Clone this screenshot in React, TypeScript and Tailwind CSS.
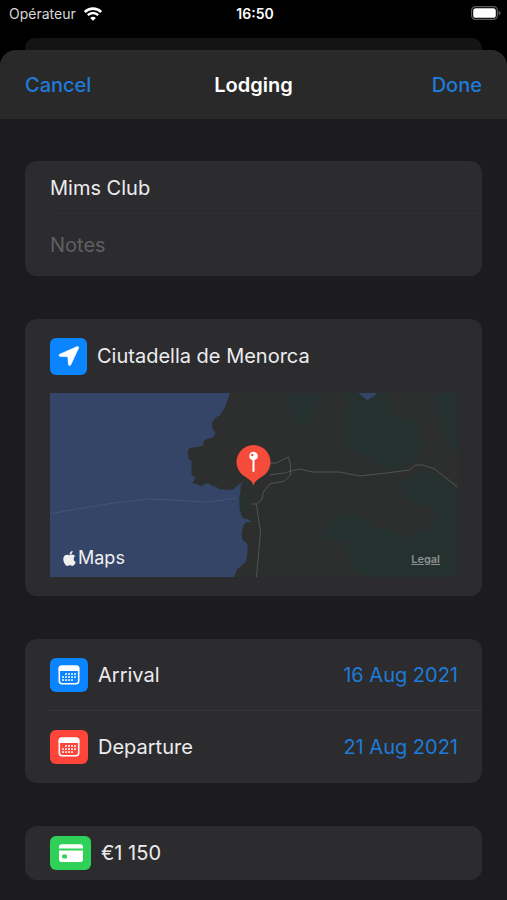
import type { ReactNode } from 'react';
import { FaApple } from 'react-icons/fa';

function WifiIcon() {
  return (
    <svg viewBox="0 0 18 14" className="h-[14px] w-[18px]" fill="none" aria-hidden="true">
      <path d="M0.800 5a11.600 11.600 0 0 1 16.400 0" stroke="#fff" strokeWidth="2.600" />
      <path d="M3.800 8.200a7.300 7.300 0 0 1 10.400 0" stroke="#fff" strokeWidth="2.400" />
      <path d="M9 13.800 6.200 11a3.900 3.900 0 0 1 5.600 0z" fill="#fff" />
    </svg>
  );
}

function BatteryIcon() {
  return (
    <svg viewBox="0 0 30 14" className="h-[14px] w-[30px]" aria-hidden="true">
      <rect x="0.6" y="0.6" width="25.8" height="12.8" rx="4" fill="none" stroke="#5c5c5c" strokeWidth="1.2" />
      <rect x="2.2" y="2.2" width="22.6" height="9.6" rx="2.6" fill="#fff" />
      <path d="M27.6 4.8c1.4.5 2 1.3 2 2.2s-.6 1.7-2 2.2z" fill="#5c5c5c" />
    </svg>
  );
}

function LocationIcon() {
  return (
    <svg viewBox="0 0 22 22" className="size-[22px]" aria-hidden="true">
      <path
        d="M19.2 1.6 1.8 9.2c-1.100.5-.9 2.200.5 2.200l7.600.3.500 7.700c.1 1.400 1.800 1.600 2.400.4l7.700-16.600c.5-1-.3-2-1.300-1.600z"
        fill="#fff"
        stroke="#fff"
        strokeWidth="0.6"
        strokeLinejoin="round"
      />
    </svg>
  );
}

const calendarDots = [
  [9, 9], [12, 9], [15, 9], [18, 9],
  [6, 12], [9, 12], [12, 12], [15, 12], [18, 12],
  [6, 15], [9, 15], [12, 15], [15, 15],
];

function CalendarIcon() {
  return (
    <svg viewBox="0 0 22 20" className="h-[20px] w-[22px]" aria-hidden="true">
      <rect x="1.3" y="1.3" width="19.4" height="17.4" rx="2.6" fill="none" stroke="#fff" strokeWidth="1.6" />
      <path d="M.6 6V3.400A2.800 2.800 0 0 1 3.400.6h15.200a2.800 2.800 0 0 1 2.800 2.800V6z" fill="#fff" />
      {calendarDots.map(([x, y]) => (
        <rect key={`${x}-${y}`} x={x - 2} y={y - 1} width="2" height="2" rx="0.5" fill="#fff" fillOpacity="0.8" />
      ))}
    </svg>
  );
}

function CardIcon() {
  return (
    <svg viewBox="0 0 26 20" className="h-[20px] w-[26px]" aria-hidden="true">
      <path d="M1 5.6V4a2.800 2.800 0 0 1 2.800-2.800h18.400A2.800 2.800 0 0 1 25 4v1.600z" fill="#fff" />
      <path
        fillRule="evenodd"
        d="M1 7.400h24v8.800a2.800 2.800 0 0 1-2.800 2.800H3.800A2.800 2.800 0 0 1 1 16.200zM5.600 11.600a1.400 1.400 0 0 0-1.400 1.400v1.200a1.400 1.400 0 0 0 1.400 1.400h2a1.400 1.400 0 0 0 1.400-1.400v-1.200a1.400 1.400 0 0 0-1.400-1.400z"
        fill="#fff"
      />
    </svg>
  );
}

function MapDrawing() {
  return (
    <svg
      viewBox="0 0 409 184"
      preserveAspectRatio="xMidYMid slice"
      className="block h-[184px] w-full"
      role="img"
      aria-label="Map of Ciutadella de Menorca"
    >
      <rect width="409" height="184" fill="#354567" />
      <path
        d="M180 0 179 5 175 15 171 22 167 24 162 30 163 36 166 40 164 44 155 47 153 53 140 55 138 60 139 66 142 68 142 82 146 85 143 90 152 93 158 90 163 93 167 94 169 96 180 97 184 96 190 91 194 89 191 93 191 98 190 104 190 116 193 125 197 126 200 127 203 129 197 129 194 132 192 140 193 147 198 151 198 160 196 169 187 177 185 184 H409 V0Z"
        fill="#2c2f2e"
      />
      <g fill="#25312f">
        <path d="M240 0h30v8l-5 8-3 12-8 7-11-5-3-14z" />
        <path d="M292 0h17l9 8 10-8h12l0 22 28 4 4 28-5 14-12 4-6 8-20-8-18-10-16-8-2-26 6-18z" />
        <path d="M386 0h23v58l-14-10-2-14-8-14z" />
        <path d="M350 90l22-12 18 6 19 16v84h-45l-8-18 0-20 12-8 14-4 4-16-10-6-20-4z" />
        <path d="M284 124l20-4 16 8 6 8 14-2 20 14 2 36h-46l-12-8-8-26-24-6 4-12z" />
        <path d="M190 104l4-1 3 6-2 12-4-4z" />
      </g>
      <path d="M309 0h18l-2 3-7 4-6-4z" fill="#354567" />
      <path d="M0 121l33-6 38-6 29-3 60 3 27-4" fill="none" stroke="#40557a" strokeWidth="1" />
      <g fill="none" stroke="#515454" strokeWidth="1" strokeLinejoin="round">
        <path d="M220 82l15-2 10-3 5-1 13 3h27l20 4 27-3 23-3 6-5h7l12 4 23 18" />
        <path d="M218 70h9l12-6 2 8v10l-6 6-15 3-6 8-2 8-5 4h-5M207 111l1 8 3 20-4 45" />
      </g>
      <path d="M204 92.500c-1-4-4-6-7.500-8.200A17 17 0 1 1 211.500 84.300C208 86.500 205 88.500 204 92.500z" fill="#f54b3a" />
      <circle cx="204" cy="63" r="4.300" fill="#fff" />
      <circle cx="202.800" cy="62" r="1.200" fill="#f54b3a" />
      <path d="M204 66v12" stroke="#fff" strokeWidth="2" strokeLinecap="round" />
    </svg>
  );
}

interface TileProps {
  className: string;
  children: ReactNode;
}

function Tile({ className, children }: TileProps) {
  return <span className={`flex shrink-0 items-center justify-center rounded-md ${className}`}>{children}</span>;
}

interface DateRowProps {
  label: string;
  value: string;
  tile: string;
}

function DateRow({ label, value, tile }: DateRowProps) {
  return (
    <div className="flex h-[72px] items-center gap-[10px] pr-6">
      <Tile className={`h-[34px] w-[38px] ${tile}`}>
        <CalendarIcon />
      </Tile>
      <span className="flex-1">{label}</span>
      <button type="button" aria-label={`${label} date, ${value}`} className="text-[#1f7ad8]">
        {value}
      </button>
    </div>
  );
}

export default function App() {
  return (
    <div className="flex min-h-screen flex-col bg-black font-['Inter','Liberation_Sans',sans-serif] text-xl text-[#ececee]">
      <div className="grid h-[38px] grid-cols-3 items-start pt-1 pr-[6px] pl-[9px] text-sm leading-5">
        <div className="flex items-center gap-[8px] text-[#d8d8d8]">
          <span>Opérateur</span>
          <WifiIcon />
        </div>
        <div className="text-center font-semibold text-white">16:50</div>
        <div className="flex h-[18px] items-center justify-end">
          <BatteryIcon />
        </div>
      </div>

      <div className="mx-[25px] h-3 rounded-t-[10px] bg-[#141414]" />

      <main className="flex-1 rounded-t-2xl bg-[#1c1c1e]">
        <header className="grid h-[69px] grid-cols-3 items-center rounded-t-2xl bg-[#29292a] px-[25px] leading-6">
          <button type="button" className="justify-self-start font-medium text-[#1f7ad8]">
            Cancel
          </button>
          <h1 className="text-center font-semibold text-white">Lodging</h1>
          <button type="button" className="justify-self-end font-medium text-[#1f7ad8]">
            Done
          </button>
        </header>

        <form className="flex flex-col gap-[43px] px-[25px] pt-[42px] pb-4">
          <section className="rounded-xl bg-[#2c2c2e] pl-[25px]">
            <input
              aria-label="Name"
              defaultValue="Mims Club"
              className="block h-[53px] w-full border-b border-[#303032] bg-transparent pt-[2px] outline-none"
            />
            <input
              aria-label="Notes"
              placeholder="Notes"
              className="block h-[62px] w-full bg-transparent outline-none placeholder:text-[#5f5f62]"
            />
          </section>

          <section className="rounded-xl bg-[#2c2c2e] pr-6 pb-[19px] pl-[25px]">
            <div className="flex h-[74px] items-center gap-[10px]">
              <Tile className="size-[37px] bg-[#0a84ff]">
                <LocationIcon />
              </Tile>
              <span>Ciutadella de Menorca</span>
            </div>
            <div className="relative">
              <MapDrawing />
              <div className="absolute bottom-[7px] left-[11px] flex items-center text-lg leading-6 text-[#f0f0f0]">
                <FaApple className="size-[17px]" aria-hidden="true" />
                <span>Maps</span>
              </div>
              <a href="#legal" className="absolute right-[18px] bottom-[10px] text-[11px] leading-4 font-semibold text-[#8b8f8e] underline">
                Legal
              </a>
            </div>
          </section>

          <section className="rounded-xl bg-[#2c2c2e] pl-[25px]">
            <DateRow label="Arrival" value="16 Aug 2021" tile="bg-[#0a84ff]" />
            <hr className="-mt-px border-[#363638]" />
            <DateRow label="Departure" value="21 Aug 2021" tile="bg-[#ff453a]" />
          </section>

          <section className="flex h-[54px] items-center gap-[10px] rounded-xl bg-[#2c2c2e] px-[25px]">
            <Tile className="h-[34px] w-[41px] bg-[#30d158]">
              <CardIcon />
            </Tile>
            <input aria-label="Price" defaultValue="€1 150" className="min-w-0 flex-1 bg-transparent outline-none" />
          </section>
        </form>
      </main>
    </div>
  );
}
